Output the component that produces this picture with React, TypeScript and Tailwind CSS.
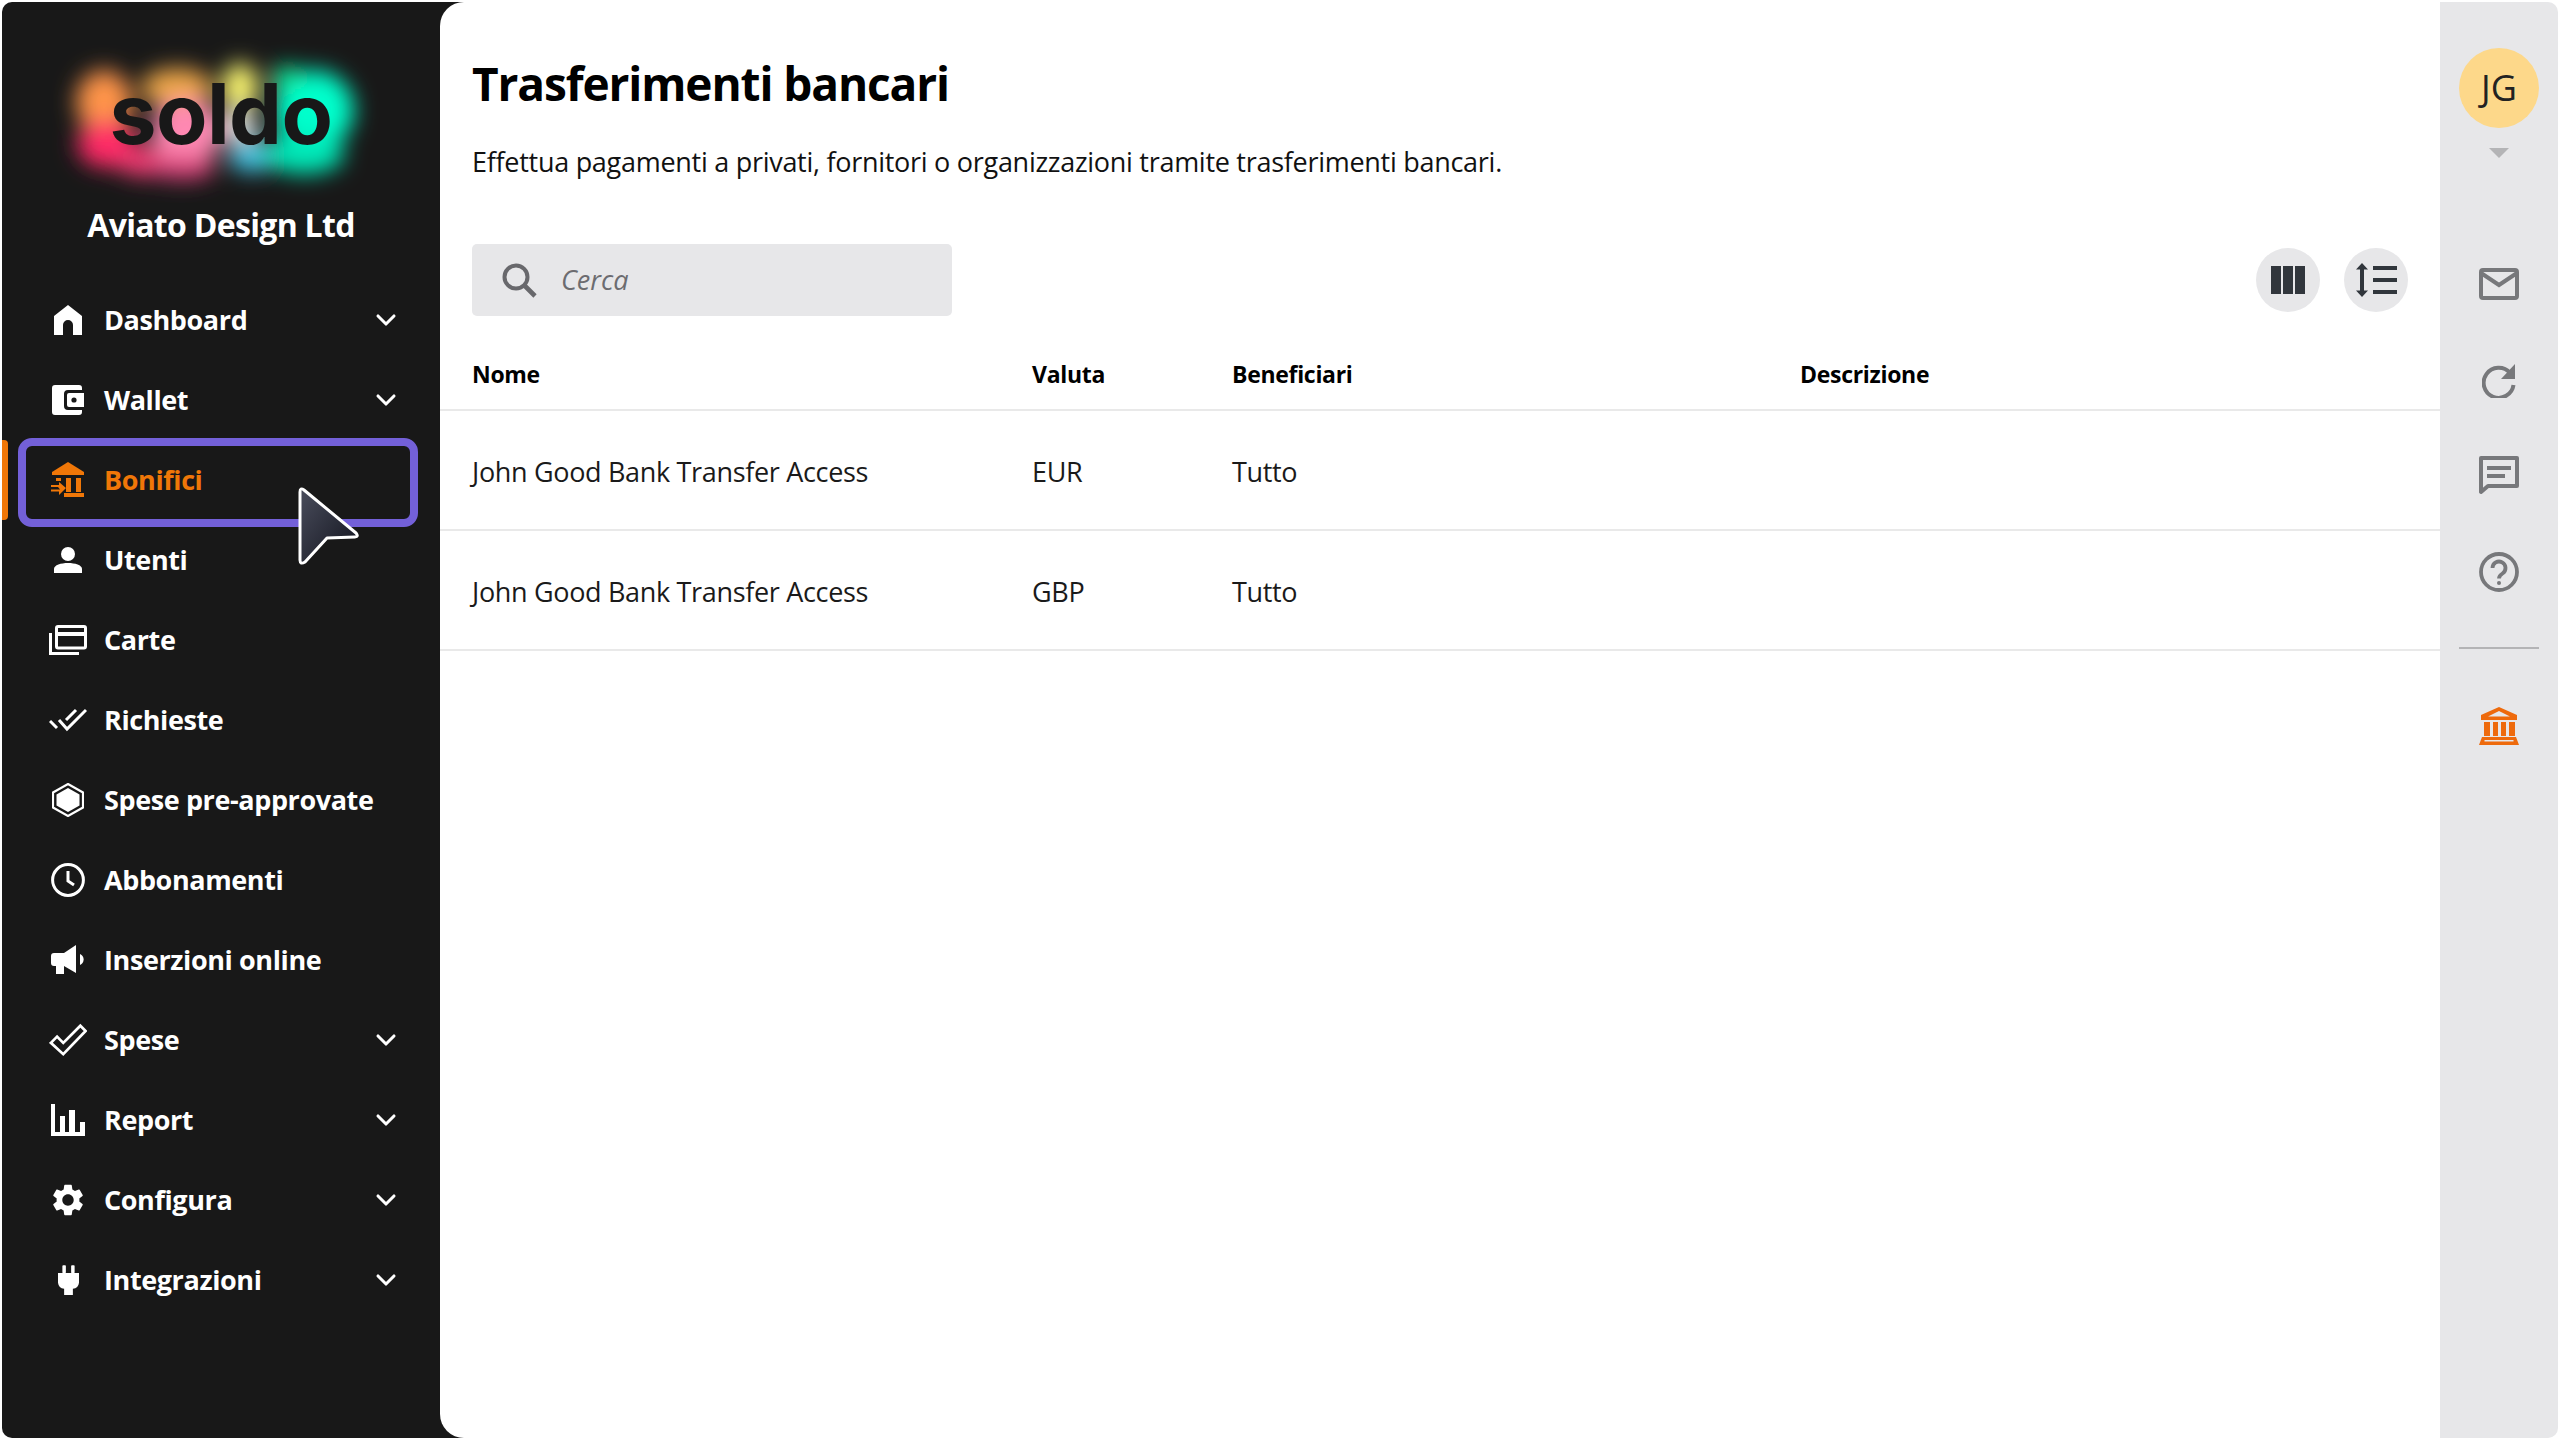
import React from 'react';
import { ChevronDown } from 'lucide-react';

const Home = () => (
  <svg viewBox="0 0 28 30" className="w-[28px] h-[30px]" fill="#fff">
    <path d="M14 0 L28 11 V30 H19 V20 a5 5 0 0 0 -10 0 V30 H0 V11 Z" />
  </svg>
);

const Wallet = () => (
  <svg viewBox="0 0 32 30" className="w-[32px] h-[30px]">
    <path fill="#fff" d="M3 0 H27 a3 3 0 0 1 3 3 V5 H16 a4 4 0 0 0 -4 4 V21 a4 4 0 0 0 4 4 H30 V27 a3 3 0 0 1 -3 3 H3 a3 3 0 0 1 -3 -3 V3 a3 3 0 0 1 3 -3 Z" />
    <path fill="#fff" d="M17 8 H32 V22 H17 a2 2 0 0 1 -2 -2 V10 a2 2 0 0 1 2 -2 Z" />
    <circle cx="22" cy="15" r="2.6" fill="#181818" />
  </svg>
);

const BankTransfer = () => (
  <svg viewBox="0 0 34 36" className="w-[34px] h-[36px]" fill="#f07708">
    <path d="M17 0 L33 10 V13 H1 V10 Z" />
    <rect x="5" y="16" width="5" height="3" />
    <rect x="15" y="16" width="5" height="14" />
    <rect x="25" y="16" width="5" height="14" />
    <rect x="13" y="31" width="20" height="4" />
    <path d="M8 20 L15 26 L8 33 V29.5 H0 V27.5 H9 L7 25 H0 V23 H8 Z" fillRule="evenodd" />
  </svg>
);

const User = () => (
  <svg viewBox="0 0 28 26" className="w-[28px] h-[26px]" fill="#fff">
    <circle cx="14" cy="7" r="7" />
    <path d="M0 26 V22 C0 18 7 16 14 16 C21 16 28 18 28 22 V26 Z" />
  </svg>
);

const Cards = () => (
  <svg viewBox="0 0 38 30" className="w-[38px] h-[30px]" fill="none" stroke="#fff" strokeWidth="3">
    <path d="M1.5 8 V28.5 H30" />
    <rect x="7.5" y="1.5" width="29" height="21.5" rx="1.5" />
    <path d="M7.5 9 H36.5" strokeWidth="4" />
  </svg>
);

const DoneAll = () => (
  <svg viewBox="0 0 38 24" className="w-[38px] h-[24px]" fill="none" stroke="#fff" strokeWidth="3">
    <path d="M1 13 L8 20" />
    <path d="M10 12 L18 21 L37 2" />
    <path d="M17 12 L27 2" />
  </svg>
);

const Hexagon = () => (
  <svg viewBox="0 0 32 34" className="w-[32px] h-[34px]">
    <path d="M16 1 L31 9.5 V24.5 L16 33 L1 24.5 V9.5 Z" fill="none" stroke="#fff" strokeWidth="2.2" />
    <path d="M16 5 L27.5 11.5 V22.5 L16 29 L4.5 22.5 V11.5 Z" fill="#fff" />
  </svg>
);

const Clock = () => (
  <svg viewBox="0 0 34 34" className="w-[34px] h-[34px]" fill="none" stroke="#fff" strokeWidth="3">
    <circle cx="17" cy="17" r="15.4" />
    <path d="M17 8 V18 L23 22" />
  </svg>
);

const Megaphone = () => (
  <svg viewBox="0 0 34 30" className="w-[34px] h-[30px]" fill="#fff">
    <path d="M3 8 H13 L25 0 V28 L13 21 H13 V29 H5 V21 H3 a3 3 0 0 1 -3 -3 V11 a3 3 0 0 1 3 -3 Z" />
    <path d="M29 9 a6 6 0 0 1 0 11 Z" />
  </svg>
);

const DoubleCheck = () => (
  <svg viewBox="0 0 40 34" className="w-[40px] h-[34px]" fill="none" stroke="#fff" strokeWidth="2.8">
    <path d="M2 20 L8.5 13.5 L15 20 L33 2 L38.5 7.5 L15 32 Z" strokeLinejoin="miter" />
  </svg>
);

const BarChart = () => (
  <svg viewBox="0 0 34 32" className="w-[34px] h-[32px]" fill="#fff">
    <rect x="0" y="0" width="4" height="32" />
    <rect x="0" y="28" width="34" height="4" />
    <rect x="9" y="12" width="5" height="18" />
    <rect x="18" y="6" width="6" height="24" />
    <rect x="29" y="18" width="5" height="12" />
  </svg>
);

const Gear = () => (
  <svg viewBox="0 0 24 24" className="w-[42px] h-[42px] -my-[4px]" fill="#fff">
    <path d="M19.14 12.94c.04-.3.06-.61.06-.94 0-.32-.02-.64-.07-.94l2.03-1.58a.49.49 0 0 0 .12-.61l-1.92-3.32a.488.488 0 0 0-.59-.22l-2.39.96c-.5-.38-1.03-.7-1.62-.94l-.36-2.54a.484.484 0 0 0-.48-.41h-3.84c-.24 0-.43.17-.47.41l-.36 2.54c-.59.24-1.13.57-1.62.94l-2.39-.96c-.22-.08-.47 0-.59.22L2.74 8.87c-.12.21-.08.47.12.61l2.03 1.58c-.05.3-.09.63-.09.94s.02.64.07.94l-2.03 1.58a.49.49 0 0 0-.12.61l1.92 3.32c.12.22.37.29.59.22l2.39-.96c.5.38 1.03.7 1.62.94l.36 2.54c.05.24.24.41.48.41h3.84c.24 0 .44-.17.47-.41l.36-2.54c.59-.24 1.13-.56 1.62-.94l2.39.96c.22.08.47 0 .59-.22l1.92-3.32c.12-.22.07-.47-.12-.61l-2.01-1.58zM12 15.6c-1.98 0-3.6-1.62-3.6-3.6s1.62-3.6 3.6-3.6 3.6 1.62 3.6 3.6-1.62 3.6-3.6 3.6z" />
  </svg>
);

const Plug = () => (
  <svg viewBox="0 0 24 34" className="w-[21px] h-[30px]" fill="#fff">
    <rect x="5" y="0" width="4" height="9" rx="1" />
    <rect x="15" y="0" width="4" height="9" rx="1" />
    <path d="M0 9 H24 V20 a8 8 0 0 1 -7 7 V34 H7 V27 a8 8 0 0 1 -7 -7 Z" />
  </svg>
);

const navItems: { label: string; icon: React.ReactNode; chevron?: boolean; active?: boolean }[] = [
  { label: 'Dashboard', icon: <Home />, chevron: true },
  { label: 'Wallet', icon: <Wallet />, chevron: true },
  { label: 'Bonifici', icon: <BankTransfer />, active: true },
  { label: 'Utenti', icon: <User /> },
  { label: 'Carte', icon: <Cards /> },
  { label: 'Richieste', icon: <DoneAll /> },
  { label: 'Spese pre-approvate', icon: <Hexagon /> },
  { label: 'Abbonamenti', icon: <Clock /> },
  { label: 'Inserzioni online', icon: <Megaphone /> },
  { label: 'Spese', icon: <DoubleCheck />, chevron: true },
  { label: 'Report', icon: <BarChart />, chevron: true },
  { label: 'Configura', icon: <Gear />, chevron: true },
  { label: 'Integrazioni', icon: <Plug />, chevron: true },
];

const rows = [
  { name: 'John Good Bank Transfer Access', currency: 'EUR', people: 'Tutto' },
  { name: 'John Good Bank Transfer Access', currency: 'GBP', people: 'Tutto' },
];

const Logo = () => (
  <div className="relative h-[201px] w-[438px]">
    <svg viewBox="0 0 438 201" className="absolute left-0 top-0 w-[438px] h-[201px]">
      <defs>
        <filter id="glow" x="-30%" y="-30%" width="160%" height="160%">
          <feGaussianBlur stdDeviation="11" />
        </filter>
      </defs>
      <g filter="url(#glow)">
        <ellipse cx="102" cy="100" rx="28" ry="32" fill="#ff9448" />
        <ellipse cx="105" cy="142" rx="30" ry="24" fill="#ff2a66" />
        <ellipse cx="142" cy="160" rx="28" ry="15" fill="#f23a72" />
        <ellipse cx="175" cy="86" rx="36" ry="20" fill="#f0a848" />
        <ellipse cx="185" cy="130" rx="36" ry="32" fill="#ff88b2" />
        <ellipse cx="180" cy="166" rx="34" ry="12" fill="#d84078" />
        <ellipse cx="238" cy="85" rx="18" ry="24" fill="#fffa72" />
        <ellipse cx="238" cy="124" rx="16" ry="16" fill="#eef4f2" />
        <ellipse cx="250" cy="154" rx="24" ry="16" fill="#44c4e4" />
        <ellipse cx="312" cy="108" rx="40" ry="40" fill="#00ffcc" />
        <ellipse cx="302" cy="152" rx="40" ry="20" fill="#00e8b8" />
        <ellipse cx="285" cy="76" rx="16" ry="12" fill="#14e898" />
      </g>
    </svg>
    <div className="absolute left-0 right-0 top-[62px] text-center text-[84px] leading-[100px] font-bold tracking-[-0.6px] text-[#181818] font-['Inter',sans-serif]">
      soldo
    </div>
  </div>
);

export default function App() {
  return (
    <div className="relative w-[2560px] h-[1440px] bg-white pl-[2px] pr-[2px] pt-[2px] flex overflow-hidden font-['Open_Sans','Noto_Sans',sans-serif]">
      <aside className="w-[462px] h-[1436px] bg-[#181818] rounded-tl-[10px] rounded-bl-[10px] shrink-0 flex flex-col">
        <Logo />
        <div className="w-[438px] text-center text-white font-bold text-[32px] tracking-[-0.7px] leading-[44px]">Aviato Design Ltd</div>
        <nav className="w-[438px] mt-[33px] flex flex-col">
          {navItems.map(item => (
            <div key={item.label} className="relative h-[80px] flex items-center pl-[47px] pr-[38px]">
              {item.active && (
                <>
                  <div className="absolute left-0 top-0 w-[6px] h-[80px] bg-[#f07708] rounded-r-[4px]" />
                  <div className="absolute left-[16px] right-[22px] top-[-2px] h-[89px] border-[8px] border-[#7360d8] rounded-[14px]" />
                </>
              )}
              <div className="w-[38px] flex justify-center shrink-0 relative">{item.icon}</div>
              <span className={`ml-[17px] text-[27px] tracking-[-0.4px] font-bold whitespace-nowrap ${item.active ? 'text-[#f07708]' : 'text-white'}`}>{item.label}</span>
              {item.chevron && <ChevronDown size={32} strokeWidth={2.3} color="#fff" className="ml-auto" />}
            </div>
          ))}
        </nav>
      </aside>

      <main className="flex-1 h-[1436px] -ml-[24px] relative bg-white rounded-l-[24px] min-w-0 flex flex-col">
        <div className="pl-[32px] pr-[32px] pt-[51px]">
          <h1 className="text-[46px] leading-[60px] tracking-[-1.1px] font-bold text-black">Trasferimenti bancari</h1>
          <p className="mt-[31px] text-[27px] leading-[36px] tracking-[-0.28px] text-[#111]">Effettua pagamenti a privati, fornitori o organizzazioni tramite trasferimenti bancari.</p>
          <div className="mt-[64px] flex items-center justify-between">
            <div className="w-[480px] h-[72px] bg-[#e7e7e9] rounded-[5px] flex items-center pl-[30px]">
              <svg viewBox="0 0 35 35" className="w-[35px] h-[35px]" fill="none" stroke="#68686c" strokeWidth="4">
                <circle cx="14" cy="14" r="11.5" />
                <path d="M22 22 L33 33" strokeWidth="4.6" />
              </svg>
              <span className="ml-[24px] italic text-[27px] text-[#6c6c70]">Cerca</span>
            </div>
            <div className="flex gap-[24px]">
              <button className="w-[64px] h-[64px] rounded-full bg-[#e7e7e9] flex items-center justify-center">
                <svg viewBox="0 0 34 28" className="w-[34px] h-[28px]" fill="#31363c">
                  <rect x="0" y="0" width="10" height="28" />
                  <rect x="12" y="0" width="10" height="28" />
                  <rect x="24" y="0" width="10" height="28" />
                </svg>
              </button>
              <button className="w-[64px] h-[64px] rounded-full bg-[#e7e7e9] flex items-center justify-center">
                <svg viewBox="0 0 42 34" className="w-[42px] h-[34px]" fill="#31363c">
                  <path d="M7 0 L13 6.5 H9 V27.5 H13 L7 34 L1 27.5 H5 V6.5 H1 Z" />
                  <rect x="18" y="3" width="24" height="4" />
                  <rect x="18" y="15" width="24" height="4" />
                  <rect x="18" y="27" width="24" height="4" />
                </svg>
              </button>
            </div>
          </div>
        </div>

        <div className="mt-[23px]">
          <div className="h-[72px] flex items-center pl-[32px] border-b-2 border-[#e9e9e9] text-[23px] tracking-[-0.3px] font-bold text-black">
            <div className="w-[560px]">Nome</div>
            <div className="w-[200px]">Valuta</div>
            <div className="w-[568px]">Beneficiari</div>
            <div>Descrizione</div>
          </div>
          {rows.map(row => (
            <div key={row.currency} className="h-[120px] pt-[5px] flex items-center pl-[32px] border-b-2 border-[#e9e9e9] text-[27px] tracking-[-0.33px] text-[#1a1a1a]">
              <div className="w-[560px]">{row.name}</div>
              <div className="w-[200px]">{row.currency}</div>
              <div className="w-[568px]">{row.people}</div>
            </div>
          ))}
        </div>
      </main>

      <aside className="w-[118px] h-[1436px] bg-[#e7e7e9] rounded-r-[10px] shrink-0 flex flex-col items-center pt-[46px]">
        <div className="w-[80px] h-[80px] rounded-full bg-[#fdd88a] flex items-center justify-center text-[36px] text-[#222] font-medium">JG</div>
        <div className="mt-[20px] w-0 h-0 border-l-[10px] border-r-[10px] border-t-[10px] border-l-transparent border-r-transparent border-t-[#b4b4b6]" />
        <svg viewBox="0 0 40 32" className="mt-[110px] w-[40px] h-[32px]" fill="none" stroke="#77787b" strokeWidth="4">
          <rect x="2" y="2" width="36" height="28" rx="2" />
          <path d="M2 5 L20 17 L38 5" />
        </svg>
        <svg viewBox="0 0 34 34" className="mt-[64px] w-[34px] h-[34px]" fill="none">
          <path d="M28 9 A15 15 0 1 0 31.5 21" stroke="#77787b" strokeWidth="4" />
          <path d="M33 0 V15 H19 Z" fill="#77787b" />
        </svg>
        <svg viewBox="0 0 40 40" className="mt-[58px] w-[40px] h-[40px]" fill="none" stroke="#77787b" strokeWidth="4">
          <path d="M2 2 H38 V30 H9 L2 36 Z" strokeLinejoin="round" />
          <path d="M8 12 H32 M8 20 H26" />
        </svg>
        <svg viewBox="0 0 40 40" className="mt-[56px] w-[40px] h-[40px]" fill="none" stroke="#77787b" strokeWidth="3.8">
          <circle cx="20" cy="20" r="18" />
          <path d="M13.5 16 a6.5 6.5 0 1 1 10 5.5 c-2.5 1.6 -3.5 2.5 -3.5 5" />
          <circle cx="20" cy="31" r="2" fill="#77787b" stroke="none" />
        </svg>
        <div className="mt-[55px] w-[80px] h-[2px] bg-[#b4b4b6]" />
        <svg viewBox="0 0 40 38" className="mt-[58px] w-[40px] h-[38px]" fill="#ee6a0c">
          <path d="M20 0 L38 8 V13 H2 V8 Z M20 4 L9 9.5 H31 Z" fillRule="evenodd" />
          <rect x="5" y="15" width="6" height="14" />
          <rect x="14" y="15" width="5" height="14" />
          <rect x="22" y="15" width="5" height="14" />
          <rect x="30" y="15" width="6" height="14" />
          <path d="M3 30 H37 L40 38 H0 Z M5.5 33 H34.5 V34.5 H5.5 Z" fillRule="evenodd" />
        </svg>
      </aside>

      <svg viewBox="0 0 66 80" className="absolute left-[296px] top-[486px] w-[66px] h-[80px]">
        <defs>
          <linearGradient id="cursorFill" x1="0" y1="0" x2="1" y2="1">
            <stop offset="0" stopColor="#4a4d5c" />
            <stop offset="1" stopColor="#10121c" />
          </linearGradient>
        </defs>
        <path d="M4 6 Q4 1 8 4 L60 47 Q63 51 59 51 L31 52 L9 76 Q4 79 4 74 Z" fill="url(#cursorFill)" stroke="#fff" strokeWidth="3" strokeLinejoin="round" />
      </svg>
    </div>
  );
}
